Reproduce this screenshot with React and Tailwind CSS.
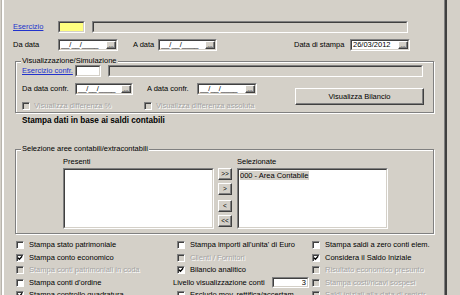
import React from 'react';

// Win classic 3D helpers
const Sunken = ({ className = '', bg = 'bg-white', children }) => (
  <div className={`border border-t-[#808080] border-l-[#808080] border-r-white border-b-white ${className}`}>
    <div className={`h-full w-full border border-t-[#404040] border-l-[#404040] border-r-[#d4d0c8] border-b-[#d4d0c8] ${bg} flex items-center overflow-hidden`}>
      {children}
    </div>
  </div>
);

const Btn = ({ className = '', children }) => (
  <div className={`flex items-center justify-center border border-t-white border-l-white border-r-[#404040] border-b-[#404040] bg-[#d4d0c8] shadow-[inset_-1px_-1px_0_#808080] ${className}`}>
    {children}
  </div>
);

const DateField = ({ className = '', value = '__/__/____' }) => (
  <Sunken className={`h-[12px] ${className}`}>
    <span className="flex-1 pl-[1px] leading-[8px]">{value}</span>
    <Btn className="h-full w-[10px] text-[6px] leading-[6px]">...</Btn>
  </Sunken>
);

const Check = ({ checked, disabled }) => (
  <span
    className={`flex h-[8px] w-[8px] shrink-0 items-center justify-center border border-t-[#808080] border-l-[#808080] border-r-white border-b-white shadow-[inset_1px_1px_0_#404040] ${
      disabled ? 'bg-[#d4d0c8]' : 'bg-white'
    }`}
  >
    {checked && (
      <svg width="6" height="6" viewBox="0 0 7 7">
        <polyline points="1,3.2 2.8,5 6,1.5" fill="none" stroke="#000" strokeWidth="1.5" />
      </svg>
    )}
  </span>
);

const Opt = ({ label, checked, disabled }) => (
  <div className="flex h-[12.5px] items-center gap-[5px]">
    <Check checked={checked} disabled={disabled} />
    <span className={`whitespace-nowrap ${disabled ? 'text-[#a4a4a4] [text-shadow:1px_1px_0_#fff]' : ''}`}>{label}</span>
  </div>
);

const Link = ({ className = '', children }) => (
  <span className={`text-[#2233cc] underline ${className}`}>{children}</span>
);

const options = [
  ['Stampa stato patrimoniale', false, false],
  ["Stampa importi all'unita' di Euro", false, false],
  ['Stampa saldi a zero conti elem.', false, false],
  ['Stampa conto economico', true, false],
  ['Clienti / Fornitori', false, true],
  ['Considera il Saldo Iniziale', true, false],
  ['Stampa conti patrimoniali in coda', false, true],
  ['Bilancio analitico', true, false],
  ['Risultato economico presunto', false, true],
  ["Stampa conti d'ordine", false, false],
  null,
  ['Stampa costi/ricavi sospesi', false, true],
  ['Stampa controllo quadratura', true, false],
  ['Escludo mov. rettifica/accertam.', false, false],
  ['Saldi iniziali alla data di registr.', false, true],
];

export default function App() {
  return (
    <div className="flex h-[295px] w-[460px] overflow-hidden bg-[#d4d0c8] font-['Liberation_Sans',Arial,sans-serif] text-[7.5px] leading-[10px] text-black">
      <div className="ml-[2px] h-full w-[445px] shrink-0 border-l-2 border-l-white border-r-2 border-r-[#404040] shadow-[inset_-1px_0_0_#808080,-1px_0_0_#b8b4ac]">
        {/* Esercizio */}
        <div className="mt-[21px] flex h-[12px] items-center pl-[9px]">
          <Link className="w-[45px]">Esercizio</Link>
          <Sunken className="h-[12px] w-[27px]" bg="bg-[#ffff80]" />
          <Sunken className="ml-[7px] h-[12px] w-[316px]" bg="bg-[#d4d0c8]" />
        </div>

        {/* Date */}
        <div className="mt-[6px] flex h-[12px] items-center pl-[9px]">
          <span className="w-[45px]">Da data</span>
          <DateField className="w-[60px]" />
          <span className="ml-[15px] w-[25px]">A data</span>
          <DateField className="w-[59px]" />
          <span className="ml-[77px] w-[56px]">Data di stampa</span>
          <DateField className="w-[60px]" value="26/03/2012" />
        </div>

        {/* Visualizzazione/Simulazione */}
        <fieldset className="ml-[11px] mt-[6px] w-[419px] border border-[#808080] pb-[2px] pl-[6px] shadow-[inset_1px_1px_0_#fff,1px_1px_0_#fff]">
          <legend className="ml-[-1px] bg-[#d4d0c8] px-[1px] leading-[8px]">Visualizzazione/Simulazione</legend>
          <div className="flex h-[12px] items-center">
            <Link className="w-[53px]">Esercizio confr.</Link>
            <Sunken className="h-[12px] w-[26px]" />
            <Sunken className="ml-[7px] h-[12px] w-[315px]" bg="bg-[#d4d0c8]" />
          </div>
          <div className="mt-[6px] flex">
            <div>
              <div className="flex h-[12px] items-center">
                <span className="w-[53px]">Da data confr.</span>
                <DateField className="w-[58px]" />
                <span className="ml-[14px] w-[50px]">A data confr.</span>
                <DateField className="w-[60px]" />
              </div>
              <div className="mt-[6px] flex h-[9px] items-center text-[#a4a4a4] [text-shadow:1px_1px_0_#fff]">
                <div className="flex w-[122px] items-center gap-[4px]">
                  <Check disabled />
                  <span>Visualizza differenza %</span>
                </div>
                <div className="flex items-center gap-[4px]">
                  <Check disabled />
                  <span>Visualizza differenza assoluta</span>
                </div>
              </div>
            </div>
            <Btn className="ml-[38px] mt-[5px] h-[17px] w-[129px]">Visualizza Bilancio</Btn>
          </div>
        </fieldset>

        <div className="ml-[18px] mt-[3px] text-[8.2px] font-bold leading-[10px]">Stampa dati in base ai saldi contabili</div>

        {/* Selezione aree */}
        <fieldset className="ml-[11px] mt-[19px] w-[419px] border border-[#808080] pb-[4px] pl-[47px] shadow-[inset_1px_1px_0_#fff,1px_1px_0_#fff]">
          <legend className="-ml-[42px] bg-[#d4d0c8] px-[1px] leading-[8px]">Selezione aree contabili/extracontabili</legend>
          <div className="flex">
            <div className="w-[151px]">
              <div className="mt-[4px] h-[10px]">Presenti</div>
              <Sunken className="mt-[1px] h-[61px] w-full" />
            </div>
            <div className="ml-[4px] mt-[15px] flex w-[14px] flex-col text-[6.5px]">
              <Btn className="h-[12px]">&gt;&gt;</Btn>
              <Btn className="mt-[3px] h-[12px]">&gt;</Btn>
              <Btn className="mt-[5px] h-[12px]">&lt;</Btn>
              <Btn className="mt-[3px] h-[12px]">&lt;&lt;</Btn>
            </div>
            <div className="ml-[5px] w-[151px]">
              <div className="mt-[4px] h-[10px]">Selezionate</div>
              <div className="mt-[1px] h-[61px] border border-t-[#808080] border-l-[#808080] border-r-white border-b-white">
                <div className="h-full border border-t-[#404040] border-l-[#404040] border-r-[#d4d0c8] border-b-[#d4d0c8] bg-white pl-[1px] pt-[1px]">
                  <span className="inline-block bg-[#d4d0c8] pr-[1px] leading-[9px]">000 - Area Contabile</span>
                </div>
              </div>
            </div>
          </div>
        </fieldset>

        {/* Opzioni */}
        <div className="mt-[5px] grid grid-cols-[161px_135px_1fr] pl-[12px]">
          {options.map((o, i) =>
            o ? (
              <Opt key={i} label={o[0]} checked={o[1]} disabled={o[2]} />
            ) : (
              <div key={i} className="-ml-[4px] flex h-[12.5px] items-center">
                <span className="w-[99px] whitespace-nowrap">Livello visualizzazione conti</span>
                <Sunken className="h-[11px] w-[37px]">
                  <span className="flex-1 pr-[1px] text-right leading-[8px]">3</span>
                </Sunken>
              </div>
            )
          )}
        </div>
      </div>
    </div>
  );
}
